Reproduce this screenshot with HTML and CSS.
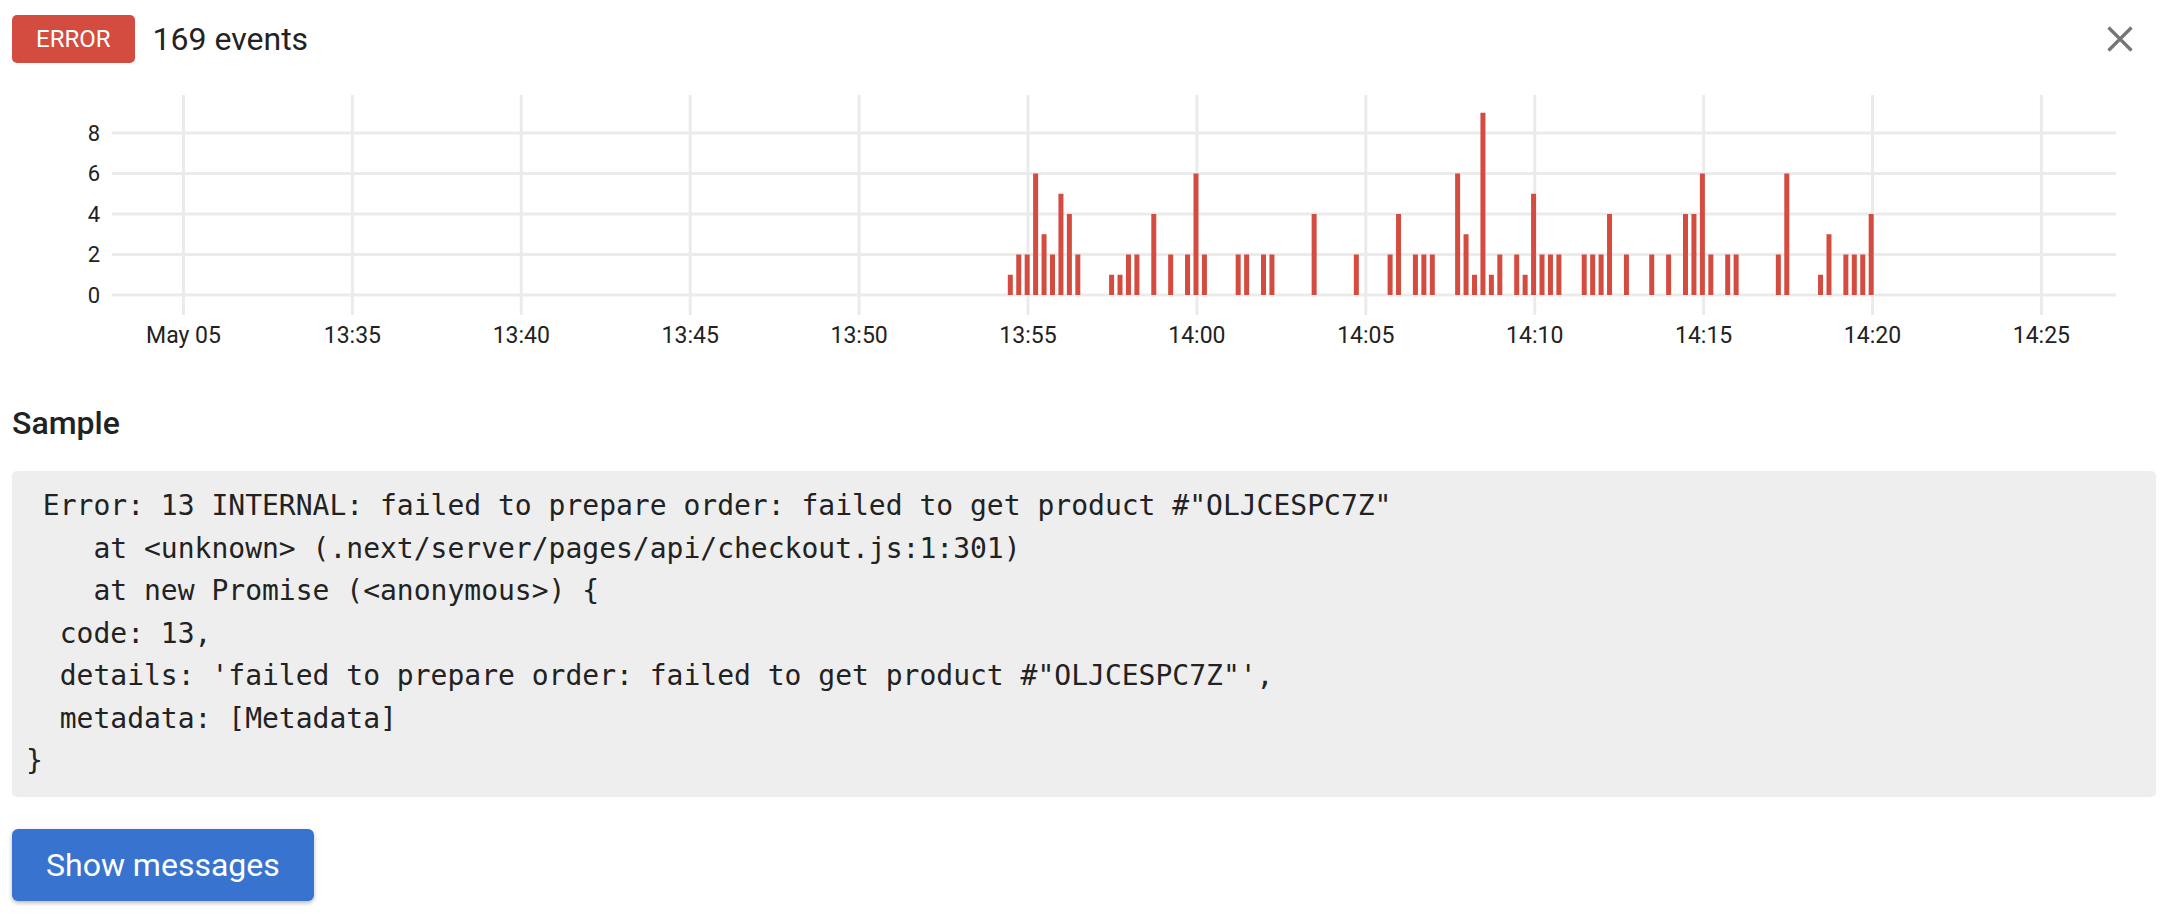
FILE: index.html
```html
<!DOCTYPE html>
<html lang="en">
<head>
<meta charset="utf-8">
<title>Error events</title>
<link rel="stylesheet" href="styles.css">
</head>
<body>
<div class="panel">
  <div class="header">
    <div class="title">
      <span class="badge">ERROR</span>
      <span class="count">169 events</span>
    </div>
    <button class="close" aria-label="Close">
      <svg width="26" height="26" viewBox="0 0 26 26"><path d="M1.5 1.5 L24.5 24.5 M24.5 1.5 L1.5 24.5" stroke="#757575" stroke-width="3.2" fill="none"/></svg>
    </button>
  </div>

  <svg class="chart" width="2144" height="317" viewBox="12 63 2144 317">
    <g class="grid">
      <line x1="183.5" y1="95" x2="183.5" y2="315"/>
      <line x1="352.4" y1="95" x2="352.4" y2="315"/>
      <line x1="521.3" y1="95" x2="521.3" y2="315"/>
      <line x1="690.2" y1="95" x2="690.2" y2="315"/>
      <line x1="859.1" y1="95" x2="859.1" y2="315"/>
      <line x1="1028" y1="95" x2="1028" y2="315"/>
      <line x1="1196.9" y1="95" x2="1196.9" y2="315"/>
      <line x1="1365.8" y1="95" x2="1365.8" y2="315"/>
      <line x1="1534.7" y1="95" x2="1534.7" y2="315"/>
      <line x1="1703.6" y1="95" x2="1703.6" y2="315"/>
      <line x1="1872.5" y1="95" x2="1872.5" y2="315"/>
      <line x1="2041.4" y1="95" x2="2041.4" y2="315"/>
      <line x1="112" y1="295" x2="2116" y2="295"/>
      <line x1="112" y1="254.5" x2="2116" y2="254.5"/>
      <line x1="112" y1="214" x2="2116" y2="214"/>
      <line x1="112" y1="173.5" x2="2116" y2="173.5"/>
      <line x1="112" y1="133" x2="2116" y2="133"/>
    </g>
    <g class="ylabels">
      <text x="100" y="302.8">0</text>
      <text x="100" y="262.3">2</text>
      <text x="100" y="221.8">4</text>
      <text x="100" y="181.3">6</text>
      <text x="100" y="140.8">8</text>
    </g>
    <g class="xlabels">
      <text x="183.5" y="342.7">May 05</text>
      <text x="352.4" y="342.7">13:35</text>
      <text x="521.3" y="342.7">13:40</text>
      <text x="690.2" y="342.7">13:45</text>
      <text x="859.1" y="342.7">13:50</text>
      <text x="1028" y="342.7">13:55</text>
      <text x="1196.9" y="342.7">14:00</text>
      <text x="1365.8" y="342.7">14:05</text>
      <text x="1534.7" y="342.7">14:10</text>
      <text x="1703.6" y="342.7">14:15</text>
      <text x="1872.5" y="342.7">14:20</text>
      <text x="2041.4" y="342.7">14:25</text>
    </g>
    <g class="bars">
      <rect x="1007.8" y="274.75" width="5" height="20.25"/>
      <rect x="1016.24" y="254.5" width="5" height="40.5"/>
      <rect x="1024.68" y="254.5" width="5" height="40.5"/>
      <rect x="1033.12" y="173.5" width="5" height="121.5"/>
      <rect x="1041.56" y="234.25" width="5" height="60.75"/>
      <rect x="1050" y="254.5" width="5" height="40.5"/>
      <rect x="1058.44" y="193.75" width="5" height="101.25"/>
      <rect x="1066.88" y="214" width="5" height="81"/>
      <rect x="1075.32" y="254.5" width="5" height="40.5"/>
      <rect x="1109.08" y="274.75" width="5" height="20.25"/>
      <rect x="1117.52" y="274.75" width="5" height="20.25"/>
      <rect x="1125.96" y="254.5" width="5" height="40.5"/>
      <rect x="1134.4" y="254.5" width="5" height="40.5"/>
      <rect x="1151.28" y="214" width="5" height="81"/>
      <rect x="1168.16" y="254.5" width="5" height="40.5"/>
      <rect x="1185.04" y="254.5" width="5" height="40.5"/>
      <rect x="1193.48" y="173.5" width="5" height="121.5"/>
      <rect x="1201.92" y="254.5" width="5" height="40.5"/>
      <rect x="1235.68" y="254.5" width="5" height="40.5"/>
      <rect x="1244.12" y="254.5" width="5" height="40.5"/>
      <rect x="1261" y="254.5" width="5" height="40.5"/>
      <rect x="1269.44" y="254.5" width="5" height="40.5"/>
      <rect x="1311.64" y="214" width="5" height="81"/>
      <rect x="1353.84" y="254.5" width="5" height="40.5"/>
      <rect x="1387.6" y="254.5" width="5" height="40.5"/>
      <rect x="1396.04" y="214" width="5" height="81"/>
      <rect x="1412.92" y="254.5" width="5" height="40.5"/>
      <rect x="1421.36" y="254.5" width="5" height="40.5"/>
      <rect x="1429.8" y="254.5" width="5" height="40.5"/>
      <rect x="1455.12" y="173.5" width="5" height="121.5"/>
      <rect x="1463.56" y="234.25" width="5" height="60.75"/>
      <rect x="1472" y="274.75" width="5" height="20.25"/>
      <rect x="1480.44" y="112.75" width="5" height="182.25"/>
      <rect x="1488.88" y="274.75" width="5" height="20.25"/>
      <rect x="1497.32" y="254.5" width="5" height="40.5"/>
      <rect x="1514.2" y="254.5" width="5" height="40.5"/>
      <rect x="1522.64" y="274.75" width="5" height="20.25"/>
      <rect x="1531.08" y="193.75" width="5" height="101.25"/>
      <rect x="1539.52" y="254.5" width="5" height="40.5"/>
      <rect x="1547.96" y="254.5" width="5" height="40.5"/>
      <rect x="1556.4" y="254.5" width="5" height="40.5"/>
      <rect x="1581.72" y="254.5" width="5" height="40.5"/>
      <rect x="1590.16" y="254.5" width="5" height="40.5"/>
      <rect x="1598.6" y="254.5" width="5" height="40.5"/>
      <rect x="1607.04" y="214" width="5" height="81"/>
      <rect x="1623.92" y="254.5" width="5" height="40.5"/>
      <rect x="1649.24" y="254.5" width="5" height="40.5"/>
      <rect x="1666.12" y="254.5" width="5" height="40.5"/>
      <rect x="1683" y="214" width="5" height="81"/>
      <rect x="1691.44" y="214" width="5" height="81"/>
      <rect x="1699.88" y="173.5" width="5" height="121.5"/>
      <rect x="1708.32" y="254.5" width="5" height="40.5"/>
      <rect x="1725.2" y="254.5" width="5" height="40.5"/>
      <rect x="1733.64" y="254.5" width="5" height="40.5"/>
      <rect x="1775.84" y="254.5" width="5" height="40.5"/>
      <rect x="1784.28" y="173.5" width="5" height="121.5"/>
      <rect x="1818.04" y="274.75" width="5" height="20.25"/>
      <rect x="1826.48" y="234.25" width="5" height="60.75"/>
      <rect x="1843.36" y="254.5" width="5" height="40.5"/>
      <rect x="1851.8" y="254.5" width="5" height="40.5"/>
      <rect x="1860.24" y="254.5" width="5" height="40.5"/>
      <rect x="1868.68" y="214" width="5" height="81"/>
    </g>
  </svg>

  <h2 class="section-title">Sample</h2>
  <pre class="sample"> Error: 13 INTERNAL: failed to prepare order: failed to get product #"OLJCESPC7Z"
    at &lt;unknown&gt; (.next/server/pages/api/checkout.js:1:301)
    at new Promise (&lt;anonymous&gt;) {
  code: 13,
  details: 'failed to prepare order: failed to get product #"OLJCESPC7Z"',
  metadata: [Metadata]
}</pre>
  <button class="primary">Show messages</button>
</div>
</body>
</html>
```

FILE: styles.css
```css
* { box-sizing: border-box; }

html, body {
  margin: 0;
  background: #ffffff;
}

body {
  font-family: Roboto, "Liberation Sans", sans-serif;
  color: #222222;
}

.panel {
  padding: 15px 12px 12px 12px;
  display: flex;
  flex-direction: column;
  align-items: flex-start;
}

.header {
  width: 100%;
  height: 48px;
  display: flex;
  align-items: center;
  justify-content: space-between;
}

.title {
  display: flex;
  align-items: center;
}

.badge {
  height: 48px;
  padding: 0 24px;
  display: flex;
  align-items: center;
  background: #d44b40;
  color: #ffffff;
  font-size: 24px;
  border-radius: 5px;
}

.count {
  margin-left: 18px;
  font-size: 32px;
  color: #222222;
}

.close {
  width: 48px;
  height: 48px;
  margin-right: 12px;
  padding: 0;
  border: none;
  background: transparent;
  display: flex;
  align-items: center;
  justify-content: center;
}

.chart {
  display: block;
}

.grid line {
  stroke: #ebebeb;
  stroke-width: 3;
}

.ylabels text {
  font-family: Roboto, "Liberation Sans", sans-serif;
  font-size: 22px;
  fill: #222222;
  text-anchor: end;
}

.xlabels text {
  font-family: Roboto, "Liberation Sans", sans-serif;
  font-size: 23px;
  fill: #222222;
  text-anchor: middle;
}

.bars rect {
  fill: #d44b40;
}

.section-title {
  margin: 25px 0 0 0;
  font-size: 32px;
  line-height: 36px;
  font-weight: 500;
  color: #222222;
}

.sample {
  width: 100%;
  margin: 30px 0 0 0;
  padding: 14px;
  background: #eeeeee;
  border-radius: 5px;
  font-family: "DejaVu Sans Mono", "Liberation Mono", monospace;
  font-size: 28px;
  line-height: 42.5px;
  color: #222222;
  white-space: pre;
}

.primary {
  margin-top: 32px;
  height: 72px;
  padding: 0 34px;
  border: none;
  border-radius: 6px;
  background: #3874cf;
  color: #ffffff;
  font-family: Roboto, "Liberation Sans", sans-serif;
  font-size: 32px;
  box-shadow: 0 2px 4px rgba(0, 0, 0, 0.28);
}
```
